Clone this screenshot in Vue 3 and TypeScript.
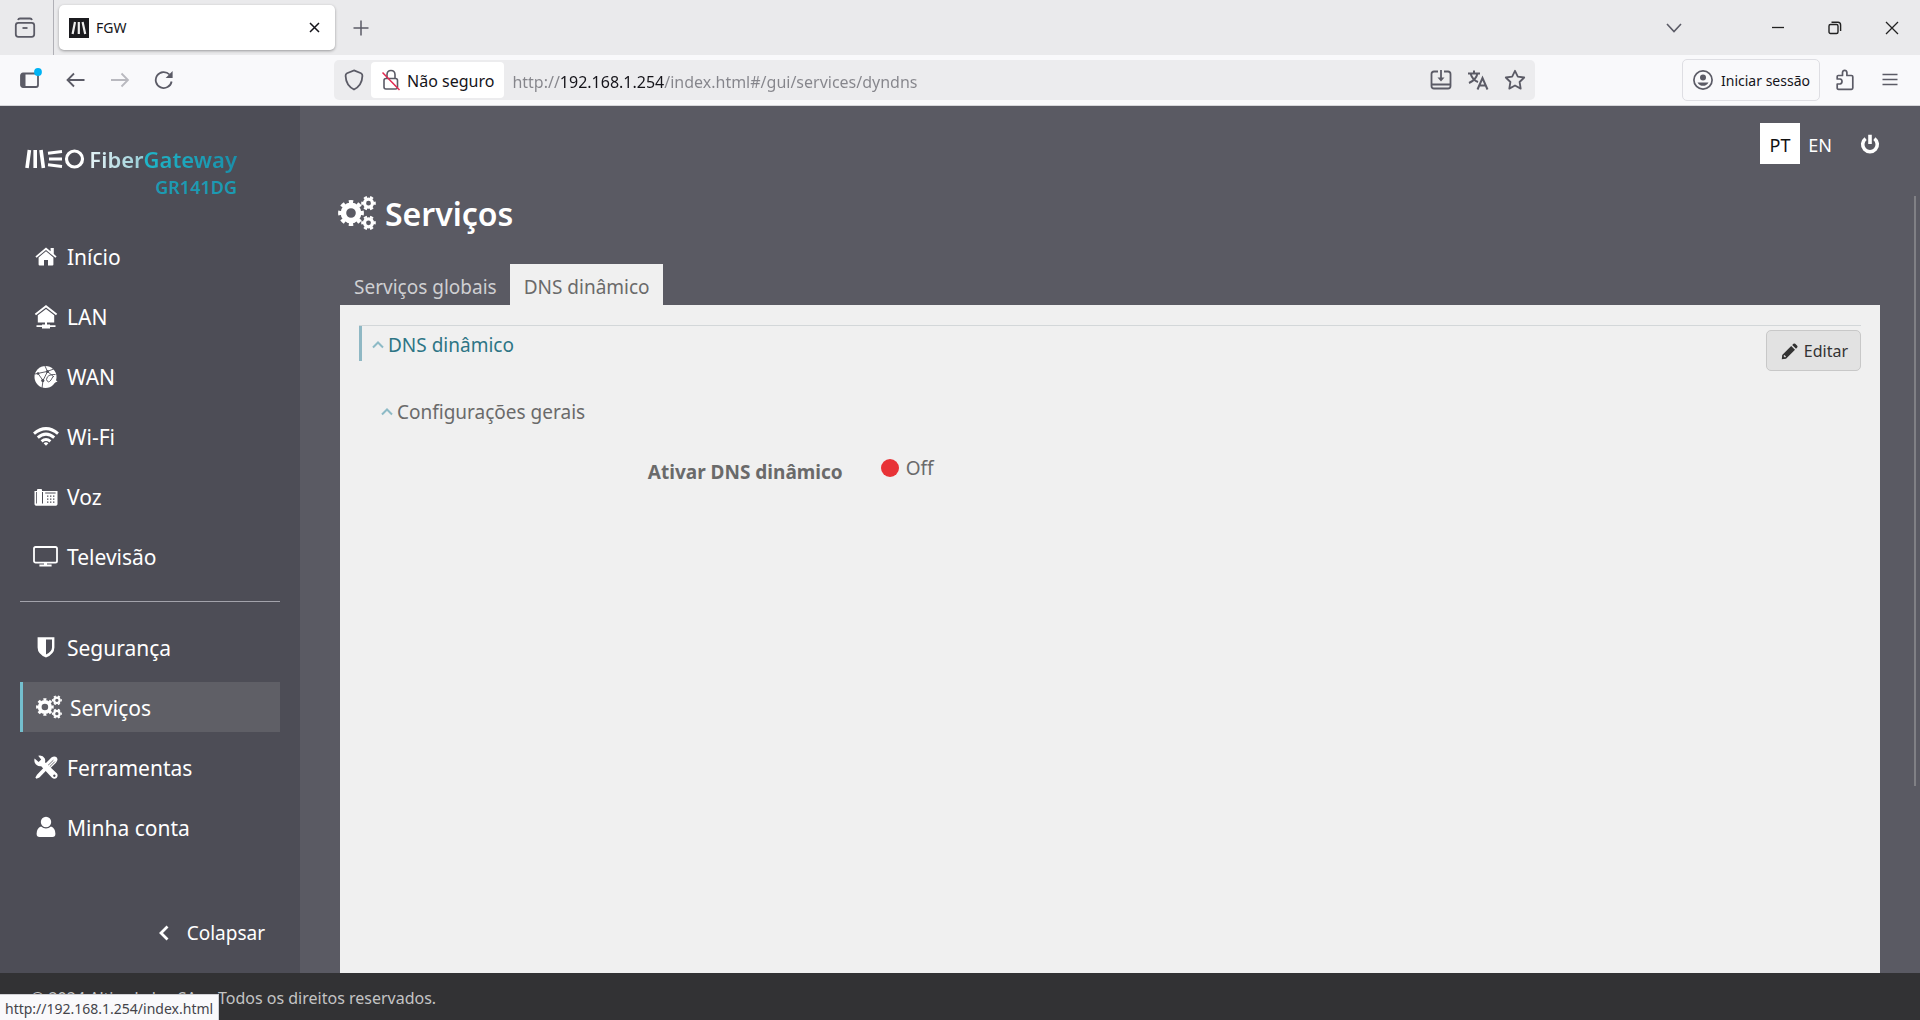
<script setup lang="ts">
import { ref } from 'vue'

interface NavItem {
  id: string
  label: string
}

const networkItems: NavItem[] = [
  { id: 'home', label: 'Início' },
  { id: 'lan', label: 'LAN' },
  { id: 'wan', label: 'WAN' },
  { id: 'wifi', label: 'Wi-Fi' },
  { id: 'voice', label: 'Voz' },
  { id: 'tv', label: 'Televisão' },
]
const systemItems: NavItem[] = [
  { id: 'security', label: 'Segurança' },
  { id: 'services', label: 'Serviços' },
  { id: 'tools', label: 'Ferramentas' },
  { id: 'account', label: 'Minha conta' },
]
const groups = [networkItems, systemItems]
const tabs = ['Serviços globais', 'DNS dinâmico']

const current = ref('services')
const activeTab = ref(1)
const address = ref('http://192.168.1.254/index.html#/gui/services/dyndns')
</script>

<template>
  <div class="window">
    <!-- Shared icon shapes -->
    <svg class="defs" aria-hidden="true">
      <symbol id="cogs" viewBox="0 0 38 34">
        <g fill="none" stroke="currentColor">
          <circle cx="13" cy="17" r="7.6" stroke-width="5.6" />
          <circle cx="13" cy="17" r="11.2" stroke-width="3.4" pathLength="16" stroke-dasharray="1 1" stroke-dashoffset="0.5" />
          <circle cx="30.5" cy="7.2" r="4" stroke-width="3.2" />
          <circle cx="30.5" cy="7.2" r="6.2" stroke-width="2.2" pathLength="12" stroke-dasharray="1 1" stroke-dashoffset="0.5" />
          <circle cx="30.5" cy="26.8" r="4" stroke-width="3.2" />
          <circle cx="30.5" cy="26.8" r="6.2" stroke-width="2.2" pathLength="12" stroke-dasharray="1 1" stroke-dashoffset="0.5" />
        </g>
      </symbol>
      <symbol id="home" viewBox="0 0 26 26">
        <path fill="currentColor" d="M13 3.5 L2.4 12.4 L3.6 13.8 L13 6 L22.4 13.8 L23.6 12.4 L20.8 10 V4 H17.6 V7.3 Z M13 7.2 L5.6 13.4 V20.6 Q5.6 21.6 6.6 21.6 H11 V16 H15 V21.6 H19.4 Q20.4 21.6 20.4 20.6 V13.4 Z" />
      </symbol>
      <symbol id="lan" viewBox="0 0 26 26">
        <path fill="currentColor" d="M13 1 L1.8 9.8 L3 11.2 L13 3.5 L23 11.2 L24.2 9.8 Z M13 5 L4.8 11.3 V18.6 H12 V20.4 H9 V21.2 H3.5 V23 H9 V24.4 H17 V23 H22.5 V21.2 H17 V20.4 H14 V18.6 H21.2 V11.3 Z" />
      </symbol>
      <symbol id="wan" viewBox="0 0 26 26">
        <circle cx="12.5" cy="13" r="11" fill="currentColor" />
        <path d="M20 14 L24.5 17.6 L19 20 Z" fill="currentColor" />
        <g fill="none" stroke="#4d4d56" stroke-width="0.9">
          <path d="M2 10 L14 7.5 L22 4.5 M5 9.5 L10 16.5 L14.5 7.5 L12 2 M10 16.5 L9 24 M14.5 7.5 L21 13 M22.5 10.5 Q14 10 13.5 15.5 Q15 20 18 16 L20 12.5" />
        </g>
        <g fill="#4d4d56"><circle cx="5" cy="9.5" r="1.3" /><circle cx="14.5" cy="7.5" r="1.5" /><circle cx="9.8" cy="16.6" r="1.6" /></g>
      </symbol>
      <symbol id="wifi" viewBox="0 0 26 26">
        <g fill="none" stroke="currentColor" stroke-width="3">
          <path d="M1 9.6 Q13 -0.4 25 9.6" />
          <path d="M4.8 13.6 Q13 6.6 21.2 13.6" />
          <path d="M8.6 17.4 Q13 13.6 17.4 17.4" />
        </g>
        <path d="M10.6 19.3 Q13 17.2 15.4 19.3 L13 21.8 Z" fill="currentColor" />
      </symbol>
      <symbol id="voice" viewBox="0 0 26 26">
        <path fill="currentColor" fill-rule="evenodd" d="M1.5 7 H4 V5.8 Q4 5 5 5 H8 Q9 5 9 5.8 V7 H24.5 V20.5 L23.3 21.7 H2.7 L1.5 20.5 Z M3.2 8 V19.6 H4 V8 Z M9 8 V19.6 H10 V8 Z M12.2 8.4 V9.4 H22.6 V8.4 Z M14 11.4 H15.4 V12.8 H14 Z M17 11.4 H18.4 V12.8 H17 Z M20 11.4 H21.4 V12.8 H20 Z M14 14.4 H15.4 V15.8 H14 Z M17 14.4 H18.4 V15.8 H17 Z M20 14.4 H21.4 V15.8 H20 Z M14 17.4 H15.4 V18.8 H14 Z M17 17.4 H18.4 V18.8 H17 Z M20 17.4 H21.4 V18.8 H20 Z" />
      </symbol>
      <symbol id="tv" viewBox="0 0 26 26">
        <rect x="1" y="3" width="23" height="15.6" rx="1.6" fill="none" stroke="currentColor" stroke-width="1.8" />
        <path d="M11 19 h3 v1.6 h4.6 v2 h-12.2 v-2 h4.6z" fill="currentColor" />
      </symbol>
      <symbol id="security" viewBox="0 0 26 26">
        <path fill="currentColor" fill-rule="evenodd" d="M4.6 3.2 H21.4 V13.5 Q21.4 20 13 23.6 Q4.6 20 4.6 13.5 Z M13 5.6 V20.6 Q19 17.6 19 13.5 V5.6 Z" />
      </symbol>
      <symbol id="tools" viewBox="0 0 26 26">
        <path d="M18.4 3.5 Q21.5 1.6 23.8 3.4 Q25.400 6 23 8.800 L15.800 15.800 L10.800 11.200 Z" fill="currentColor" />
        <path d="M14.800 11.600 L20.400 6.200 M16.400 13 L21.800 7.600" stroke="#4d4d56" stroke-width="0.800" />
        <path d="M10.600 13.800 L13.200 16.400 L6.400 23.600 L3.400 24.800 L2.400 23.600 L4 20.800 Z" fill="currentColor" />
        <path fill="currentColor" fill-rule="evenodd" d="M1.600 4.600 L5.600 8 L8.200 5.400 L5.200 1.800 Q9.600 0.800 11.800 4.400 Q12.600 6.400 12 8.200 L24 19.600 Q25.400 22 23.600 24 Q21.400 25.600 19 23.800 L8.200 12.200 Q3.800 12.800 1.800 8.800 Q1 6.400 1.600 4.600 Z M21.300 20.500 a1.200 1.200 0 1 0 .1 0z" />
      </symbol>
      <symbol id="account" viewBox="0 0 26 26">
        <circle cx="13" cy="8" r="5.200" fill="currentColor" />
        <path d="M8 12.400 Q13 16.600 18 12.400 Q22.400 14 22.400 19.800 Q22.400 23 19.400 23 H6.600 Q3.600 23 3.600 19.800 Q3.600 14 8 12.400 Z" fill="currentColor" />
      </symbol>
    </svg>

    <header class="chrome">
      <div class="tabstrip">
        <button class="icon-btn archive" aria-label="Separadores recentes">
          <svg width="22" height="22" viewBox="0 0 22 22" fill="none" stroke="#5b5b66" stroke-width="1.8">
            <path d="M4 3 Q4.5 1.5 6 1.5 H16 Q17.5 1.5 18 3" /><rect x="1.8" y="5.8" width="18.4" height="14" rx="2.5" /><path d="M8.5 11 h5" />
          </svg>
        </button>
        <div class="browser-tab">
          <svg width="20" height="20" viewBox="0 0 20 20"><rect width="20" height="20" fill="#1b1b1f" /><path d="M6 4 L3.6 16 M9.8 4 V16 M13.6 4 L16.2 16" stroke="#eee" stroke-width="2.2" /></svg>
          <span class="tab-name">FGW</span>
          <button class="icon-btn" aria-label="Fechar separador">
            <svg width="11" height="11" viewBox="0 0 11 11" stroke="#15141a" stroke-width="1.5"><path d="M1 1 L10 10 M10 1 L1 10" /></svg>
          </button>
        </div>
        <button class="icon-btn plus" aria-label="Novo separador">
          <svg width="16" height="16" viewBox="0 0 16 16" stroke="#5b5b66" stroke-width="1.5"><path d="M8 0.5 V15.5 M0.5 8 H15.5" /></svg>
        </button>
        <div class="window-buttons">
          <button class="icon-btn list" aria-label="Listar separadores"><svg width="16" height="10" viewBox="0 0 16 10" fill="none" stroke="#5b5b66" stroke-width="1.6"><path d="M1 1 L8 8.5 L15 1" /></svg></button>
          <button class="icon-btn" aria-label="Minimizar"><svg width="14" height="14" viewBox="0 0 14 14" stroke="#222" stroke-width="1.3"><path d="M1 6.5 H13" /></svg></button>
          <button class="icon-btn" aria-label="Restaurar"><svg width="14" height="14" viewBox="0 0 14 14" fill="none" stroke="#222" stroke-width="1.4"><rect x="1" y="3.5" width="9" height="9" rx="1.5" /><path d="M3.5 1.2 H10 Q12.6 1.2 12.6 4 V10" /></svg></button>
          <button class="icon-btn" aria-label="Fechar"><svg width="14" height="14" viewBox="0 0 14 14" stroke="#222" stroke-width="1.3"><path d="M1 1 L13 13 M13 1 L1 13" /></svg></button>
        </div>
      </div>

      <div class="toolbar">
        <div class="nav-buttons">
          <button class="icon-btn" aria-label="Barra lateral">
            <svg width="24" height="24" viewBox="0 0 24 24"><rect x="3" y="5.5" width="17" height="13.5" rx="2" fill="none" stroke="#5b5b66" stroke-width="1.8" /><path d="M3 6 h4.5 v13 h-4.5z" fill="#5b5b66" /><circle cx="20" cy="4" r="3.9" fill="#00b3f4" /></svg>
          </button>
          <button class="icon-btn" aria-label="Retroceder"><svg width="20" height="20" viewBox="0 0 20 20" fill="none" stroke="#5b5b66" stroke-width="1.8"><path d="M18.500 10 H1.500 M8 3.500 L1.500 10 L8 16.500" /></svg></button>
          <button class="icon-btn" aria-label="Avançar"><svg width="20" height="20" viewBox="0 0 20 20" fill="none" stroke="#b9b9bf" stroke-width="1.8"><path d="M1 10 H18 M11.500 3.500 L18 10 L11.500 16.500" /></svg></button>
          <button class="icon-btn" aria-label="Recarregar"><svg width="20" height="20" viewBox="0 0 20 20"><path d="M17.6 11.5 A8 8 0 1 1 15.5 4.5" fill="none" stroke="#5b5b66" stroke-width="1.8" /><path d="M18.6 1 V8 H11.6 Z" fill="#5b5b66" /></svg></button>
        </div>
        <div class="urlbar">
          <svg class="shield" width="20" height="22" viewBox="0 0 20 22" fill="none" stroke="#5b5b66" stroke-width="1.8"><path d="M10 1.400 L17 4.200 Q18.600 5 18.400 7 Q18 16.500 10 20.500 Q2 16.500 1.600 7 Q1.400 5 3 4.200 Z" /></svg>
          <button class="identity">
            <svg width="20" height="22" viewBox="0 0 20 22" fill="none"><rect x="3" y="9.5" width="13.5" height="10.5" rx="2" stroke="#5b5b66" stroke-width="1.6" /><path d="M6 9 V5.5 Q6.2 1.5 10 1.5 Q13.8 1.5 14 5.5 V9" stroke="#5b5b66" stroke-width="1.6" /><path d="M1.5 3.5 L18.5 21" stroke="#e22850" stroke-width="1.5" /></svg>
            <span>Não seguro</span>
          </button>
          <input v-model="address" class="address" type="text" aria-label="Endereço" />
          <button class="icon-btn" aria-label="Instalar"><svg width="22" height="20" viewBox="0 0 22 20" fill="none" stroke="#5b5b66" stroke-width="1.8"><path d="M8 1.5 H4 Q1.500 1.500 1.500 4 V16 Q1.500 18.500 4 18.500 H18 Q20.500 18.500 20.500 16 V4 Q20.500 1.500 18 1.500 H14 M1.500 14.500 H20.500 M11 0 V10" /><path d="M7.5 7.5 H14.5 L11 11.5 Z" fill="#5b5b66" stroke="none" /></svg></button>
          <button class="icon-btn" aria-label="Traduzir"><svg width="22" height="20" viewBox="0 0 22 20" fill="none" stroke="#5b5b66" stroke-width="2"><path d="M1 3.500 H13 M7 0.500 V3.500 M3.500 3.500 Q5.500 10 11 12 M10.500 3.500 Q9 10 2 13 M10.500 19.500 L15.500 8 L20.500 19.500 M12.300 15.500 H18.700" /></svg></button>
          <button class="icon-btn" aria-label="Marcar"><svg width="22" height="22" viewBox="0 0 22 22" fill="none" stroke="#5b5b66" stroke-width="1.8" stroke-linejoin="round"><path d="M11 1.800 L13.800 7.600 L20.200 8.500 L15.600 13 L16.700 19.600 L11 16.500 L5.300 19.600 L6.400 13 L1.800 8.500 L8.200 7.600 Z" /></svg></button>
        </div>
        <div class="toolbar-end">
          <button class="signin">
            <svg width="20" height="20" viewBox="0 0 20 20"><circle cx="10" cy="10" r="9.1" fill="none" stroke="#5b5b66" stroke-width="1.7" /><circle cx="10" cy="7.5" r="3" fill="#5b5b66" /><path d="M4.5 12.4 H15.5 Q13.5 15.8 10 15.8 Q6.5 15.8 4.5 12.4 Z" fill="#5b5b66" /></svg>
            <span>Iniciar sessão</span>
          </button>
          <button class="icon-btn" aria-label="Extensões"><svg width="20" height="22" viewBox="0 0 20 22" fill="none" stroke="#5b5b66" stroke-width="1.7" stroke-linejoin="round"><path d="M2.2 10 V7.5 Q2.2 6.5 3.2 6.5 H7.5 V3.6 Q7.700 1.400 9.700 1.400 Q11.700 1.400 11.900 3.600 V6.500 H16.500 Q17.800 6.500 17.800 7.800 V19 Q17.800 20.300 16.500 20.300 H3.500 Q2.200 20.300 2.200 19 V15 H5 Q7 14.600 7 12.500 Q7 10.300 5 10 Z" /></svg></button>
          <button class="icon-btn" aria-label="Menu"><svg width="16" height="14" viewBox="0 0 16 14" stroke="#5b5b66" stroke-width="1.6"><path d="M0.5 1.5 H15.5 M0.5 6.5 H15.5 M0.5 11.5 H15.5" /></svg></button>
        </div>
      </div>
    </header>

    <div class="page">
      <aside class="sidebar">
        <div class="brand">
          <div class="brand-row">
            <svg width="60" height="20" viewBox="0 0 60 20" fill="none" stroke="#fff" stroke-width="3.6" aria-label="MEO">
              <path d="M4.4 1 L2 19 M10.2 1 V19 M16 1 L18.4 19" />
              <path d="M23 4.200 L37 2.600 M24 10 H37 M23 15.800 L37 17.400" stroke-width="3" />
              <circle cx="49.5" cy="10" r="8" stroke-width="3.2" />
            </svg>
            <span class="fiber">FiberGateway</span>
          </div>
          <span class="model">GR141DG</span>
        </div>
        <nav class="menu">
          <ul v-for="(group, g) in groups" :key="g">
            <li v-for="item in group" :key="item.id">
              <a href="#" :class="{ active: current === item.id }" @click.prevent="current = item.id">
                <svg width="26" height="26" aria-hidden="true"><use :href="item.id === 'services' ? '#cogs' : '#' + item.id" /></svg>
                <span>{{ item.label }}</span>
              </a>
            </li>
          </ul>
        </nav>
        <button class="collapse">
          <svg width="10" height="16" viewBox="0 0 10 16" fill="none" stroke="#fff" stroke-width="2.8"><path d="M8.5 1.5 L2 8 L8.5 14.5" /></svg>
          <span>Colapsar</span>
        </button>
      </aside>

      <main class="content">
        <div class="session">
          <button class="lang selected">PT</button>
          <button class="lang">EN</button>
          <button class="icon-btn power" aria-label="Sair">
            <svg width="20" height="20" viewBox="0 0 20 20" fill="none" stroke="#fff" stroke-width="3.6"><path d="M5.6 4.600 A7.300 7.300 0 1 0 14.400 4.600 M10 0.800 V10" /></svg>
          </button>
        </div>
        <h1><svg width="38" height="36" aria-hidden="true"><use href="#cogs" /></svg><span>Serviços</span></h1>
        <div class="tabs" role="tablist">
          <button v-for="(tab, i) in tabs" :key="tab" role="tab" :class="{ active: activeTab === i }" @click="activeTab = i">{{ tab }}</button>
        </div>
        <section class="panel">
          <div class="section-head">
            <h2><svg width="12" height="8" viewBox="0 0 12 8"><path d="M1 6.5 L6 1.5 L11 6.5" /></svg>DNS dinâmico</h2>
            <button class="edit">
              <svg width="17" height="17" viewBox="0 0 17 17"><path d="M11.2 2 L15 5.8 L16.2 4.6 Q17 3.6 16.2 2.8 L14.2 0.8 Q13.3 0 12.4 0.8 Z M10.2 3 L14 6.8 L5 15.8 L0.8 16.3 L1.2 12 Z" fill="#333" /><path d="M3 12.5 L4.5 14" stroke="#e2e2e2" stroke-width="1.4" /></svg>
              <span>Editar</span>
            </button>
          </div>
          <h3><svg width="12" height="8" viewBox="0 0 12 8"><path d="M1 6.5 L6 1.5 L11 6.5" /></svg>Configurações gerais</h3>
          <dl class="field">
            <dt>Ativar DNS dinâmico</dt>
            <dd><i class="dot"></i>Off</dd>
          </dl>
        </section>
        <div class="scroll-thumb"></div>
      </main>
    </div>

    <footer class="footer">
      <span>© 2024 Altice Labs, SA.</span><span>Todos os direitos reservados.</span>
      <div class="status">http://192.168.1.254/index.html</div>
    </footer>
  </div>
</template>

<style>
body {
  margin: 0;
}
</style>

<style scoped>
.window {
  display: flex;
  flex-direction: column;
  min-height: 100vh;
  font-family: 'Noto Sans', 'Open Sans', sans-serif;
  background: #5a5a63;
}
.window * {
  box-sizing: border-box;
}
.defs {
  position: absolute;
  width: 0;
  height: 0;
}
svg {
  display: block;
  flex: none;
}
button {
  margin: 0;
  padding: 0;
  border: 0;
  background: none;
  color: inherit;
  font: inherit;
  cursor: pointer;
}
.icon-btn {
  display: flex;
  align-items: center;
  justify-content: center;
}

/* Browser chrome */
.chrome {
  color: #15141a;
  background: #f9f9fb;
  border-bottom: 1px solid #d6d6da;
}
.tabstrip {
  display: flex;
  align-items: center;
  height: 55px;
  background: #eaeaec;
}
.archive {
  width: 54px;
  height: 55px;
  padding-right: 4px;
  border-right: 1px solid #b0b0b6;
}
.browser-tab {
  display: flex;
  align-items: center;
  width: 276px;
  height: 45px;
  margin-left: 5px;
  padding: 0 15px 0 10px;
  background: #fff;
  border-radius: 5px;
  box-shadow: 0 1px 3px rgba(0, 0, 0, 0.35);
}
.tab-name {
  flex: 1;
  margin-left: 7px;
  font-size: 14px;
}
.plus {
  margin-left: 18px;
}
.window-buttons {
  display: flex;
  gap: 43px;
  margin-left: auto;
  padding-right: 21px;
}
.list {
  margin-right: 46px;
}
.toolbar {
  display: flex;
  align-items: center;
  height: 50px;
}
.nav-buttons {
  display: flex;
  align-items: center;
  gap: 24px;
  width: 334px;
  padding-left: 18px;
}
.urlbar {
  display: flex;
  align-items: center;
  flex: 1;
  gap: 15px;
  height: 40px;
  padding: 0 9px 0 10px;
  background: #ececee;
  border-radius: 5px;
}
.shield {
  margin-right: -8px;
}
.identity {
  display: flex;
  align-items: center;
  gap: 6px;
  height: 36px;
  margin-right: -7px;
  padding: 2px 10px 0;
  background: #fff;
  border-radius: 4px;
  font-size: 16px;
}
.identity svg {
  margin-top: -2px;
}
.address {
  flex: 1;
  min-width: 0;
  height: 36px;
  padding: 3px 0 0;
  border: 0;
  outline: 0;
  font: inherit;
  font-size: 16px;
  color: #15141a;
  background: linear-gradient(90deg, #85858b 48px, #15141a 48px, #15141a 152px, #85858b 152px);
  -webkit-background-clip: text;
  background-clip: text;
  -webkit-text-fill-color: transparent;
}
.toolbar-end {
  display: flex;
  align-items: center;
  justify-content: flex-end;
  width: 385px;
  gap: 27px;
  padding-right: 22px;
}
.signin {
  display: flex;
  align-items: center;
  gap: 8px;
  height: 42px;
  margin-right: -12px;
  padding: 0 9px 0 10px;
  border: 1px solid #dedee3;
  border-radius: 5px;
  font-size: 14px;
}

/* Page */
.page {
  display: flex;
  flex: 1;
}
.sidebar {
  display: flex;
  flex-direction: column;
  width: 300px;
  padding: 0 20px;
  background: #4d4d56;
  color: #fff;
}
.brand {
  display: flex;
  flex-direction: column;
  align-items: flex-end;
  height: 126px;
  padding: 38px 43px 0 0;
}
.brand-row {
  display: flex;
  align-items: center;
  gap: 4px;
  height: 30px;
}
.fiber {
  font-size: 22px;
  font-weight: 600;
  color: transparent;
  background: linear-gradient(90deg, #e6f3f6, #9bd0d9 36%, #1fb6c8 38%, #1a8faa);
  -webkit-background-clip: text;
  background-clip: text;
}
.model {
  font-size: 18px;
  line-height: 26px;
  font-weight: 600;
  color: #1c9ab2;
}
.menu ul {
  display: flex;
  flex-direction: column;
  gap: 10px;
  margin: 0;
  padding: 0;
  list-style: none;
}
.menu ul + ul {
  margin-top: 19px;
  padding-top: 20px;
  border-top: 1px solid #a3a3ab;
}
.menu a {
  display: flex;
  align-items: center;
  gap: 8px;
  height: 50px;
  padding-left: 13px;
  color: #fff;
  font-size: 21px;
  text-decoration: none;
}
.menu ul + ul span {
  padding-top: 2px;
}
.menu a.active {
  border-left: 3px solid #74bfce;
  background: #5f5f66;
}
.collapse {
  display: flex;
  align-items: center;
  justify-content: flex-end;
  gap: 18px;
  height: 40px;
  margin: auto 0 20px;
  padding-right: 15px;
  font-size: 19px;
}
.content {
  position: relative;
  display: flex;
  flex-direction: column;
  flex: 1;
  padding: 17px 40px 0;
}
.session {
  display: flex;
  align-items: center;
  justify-content: flex-end;
  color: #fff;
}
.lang {
  width: 40px;
  height: 41px;
  padding-top: 2px;
  font-size: 18px;
}
.lang.selected {
  background: #fff;
  color: #111;
}
.power {
  margin-left: 20px;
}
h1 {
  display: flex;
  align-items: center;
  gap: 9px;
  height: 60px;
  margin: 19px 0 21px -2px;
  color: #fff;
  font-size: 32px;
  font-weight: 600;
}
.tabs {
  display: flex;
}
.tabs button {
  height: 41px;
  padding: 4px 13px 0 14px;
  color: #cfcfd2;
  font-size: 19px;
}
.tabs button.active {
  background: #f0f0f0;
  color: #6a6a6a;
}
.panel {
  flex: 1;
  padding: 20px 19px;
  background: #f0f0f0;
  color: #6a6a6a;
  font-size: 19px;
}
.section-head {
  display: flex;
  align-items: flex-start;
  justify-content: space-between;
  border-top: 1px solid #d3d7d9;
}
h2,
h3 {
  display: flex;
  align-items: center;
  gap: 4px;
  margin: 0;
  font-size: 19px;
  font-weight: 400;
}
h2 {
  height: 35px;
  padding: 2px 0 0 10px;
  border-left: 3px solid #8fb8c4;
  color: #2d7585;
}
h3 {
  height: 28px;
  margin-top: 27px;
  padding-left: 22px;
}
h2 svg,
h3 svg {
  fill: none;
  stroke: #8dbac6;
  stroke-width: 2px;
}
.edit {
  display: flex;
  align-items: center;
  gap: 6px;
  height: 41px;
  margin-top: 4px;
  padding: 1px 12px 0 14px;
  border: 1px solid #c8c8c8;
  border-radius: 5px;
  background: #e2e2e2;
  color: #333;
  font-size: 16px;
}
.field {
  display: grid;
  grid-template-columns: 1fr 2fr;
  margin: 31px 0 0;
  line-height: 22px;
}
dt {
  padding: 4px 17px 0 0;
  font-weight: 700;
  text-align: right;
}
dd {
  display: flex;
  align-items: center;
  gap: 7px;
  height: 22px;
  margin: 0;
  padding-left: 21px;
}
.dot {
  width: 18px;
  height: 18px;
  border-radius: 50%;
  background: #e83337;
}
.scroll-thumb {
  position: absolute;
  top: 90px;
  right: 4px;
  width: 2px;
  height: 68%;
  background: #808085;
}
.footer {
  position: relative;
  display: flex;
  align-items: center;
  gap: 17px;
  height: 47px;
  padding: 2px 0 0 31px;
  background: #323234;
  color: #c4c4c4;
  font-size: 16px;
}
.status {
  position: absolute;
  left: 0;
  bottom: 0;
  height: 26px;
  padding: 1px 5px 0;
  border: 1px solid #d0d0d4;
  border-width: 1px 1px 0 0;
  background: #f9f9fb;
  color: #44444a;
  font-size: 14px;
  line-height: 26px;
}
</style>
